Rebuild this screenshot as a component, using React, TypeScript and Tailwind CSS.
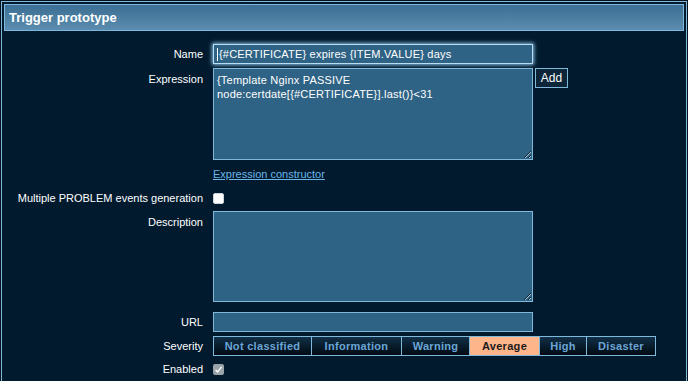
import React from 'react';

const severities = [
  { label: 'Not classified', w: 'w-[98px]' },
  { label: 'Information', w: 'w-[90px]' },
  { label: 'Warning', w: 'w-[68px]' },
  { label: 'Average', w: 'w-[70px]', active: true },
  { label: 'High', w: 'w-[47px]' },
  { label: 'Disaster', w: 'w-[69px]' },
];

const Label: React.FC<{ children: React.ReactNode; className?: string }> = ({ children, className }) => (
  <div className={`w-[199px] shrink-0 text-right text-white ${className || ''}`}>{children}</div>
);

const App: React.FC = () => {
  return (
    <div
      className="w-[688px] h-[381px] overflow-hidden bg-[#04101c] pl-[1px] pt-[1px] text-[11px]"
      style={{ fontFamily: '"Liberation Sans", Arial, sans-serif' }}
    >
      <div className="w-[686px] h-[380px] border-l border-t border-r border-[#7fb9dc] bg-[#011a2e] pt-[2px] px-[2px]">
        {/* header */}
        <div className="h-[27px] border border-[#7cb8de] bg-gradient-to-b from-[#3a6e92] to-[#5c8db0] flex items-center pl-[4px]">
          <span className="text-white font-bold text-[13px]">Trigger prototype</span>
        </div>

        <div className="flex flex-col">
          {/* Name */}
          <div className="flex mt-[13px]">
            <Label className="leading-[20px]">Name</Label>
            <div className="ml-[10px] w-[320px] h-[20px] border border-[#b8dcf2] bg-[#2f6385] shadow-[0_0_4px_1px_#8cc4e8] text-white leading-[18px] pl-[3px] flex items-center tracking-[0.2px]">
              <span className="w-[1px] h-[13px] bg-white mr-[1px]" />
              {'{#CERTIFICATE} expires {ITEM.VALUE} days'}
            </div>
          </div>

          {/* Expression */}
          <div className="flex mt-[4px]">
            <Label className="pt-[4px] leading-[14px]">Expression</Label>
            <textarea
              readOnly
              defaultValue={'{Template Nginx PASSIVE node:certdate[{#CERTIFICATE}].last()}<31'}
              className="ml-[10px] w-[320px] h-[92px] border border-[#80b8d9] bg-[#2f6385] text-white text-[11px] leading-[14px] px-[3px] pt-[4px] outline-none resize-y tracking-[0.2px]"
            />
            <button className="ml-[2px] w-[33px] h-[20px] border border-[#80b8d9] bg-[#0c2538] text-white text-[12px] leading-[18px]">
              Add
            </button>
          </div>

          {/* constructor link */}
          <div className="flex mt-[7px]">
            <div className="w-[199px] shrink-0" />
            <a className="ml-[10px] text-[#6cb6e8] underline leading-[14px] cursor-pointer">Expression constructor</a>
          </div>

          {/* Multiple PROBLEM */}
          <div className="flex mt-[10px] items-center">
            <Label className="leading-[14px]">Multiple PROBLEM events generation</Label>
            <span className="ml-[10px] w-[11px] h-[11px] rounded-[2px] bg-white border border-[#c9d3da]" />
          </div>

          {/* Description */}
          <div className="flex mt-[6px]">
            <Label className="pt-[4px] leading-[14px]">Description</Label>
            <textarea
              readOnly
              className="ml-[10px] w-[320px] h-[91px] border border-[#80b8d9] bg-[#2f6385] text-white text-[11px] outline-none"
            />
          </div>

          {/* URL */}
          <div className="flex mt-[10px]">
            <Label className="leading-[20px]">URL</Label>
            <div className="ml-[10px] w-[320px] h-[20px] border border-[#80b8d9] bg-[#2f6385]" />
          </div>

          {/* Severity */}
          <div className="flex mt-[4px]">
            <Label className="leading-[20px]">Severity</Label>
            <div className="ml-[10px] flex h-[20px] border-y border-r border-[#7fb9dc]">
              {severities.map((s) => (
                <div
                  key={s.label}
                  className={`${s.w} h-full flex items-center justify-center font-bold text-[11px] tracking-[0.3px] border-l border-[#7fb9dc] ${
                    s.active
                      ? 'bg-[#ffb58a] text-[#1b1b1b]'
                      : 'bg-gradient-to-b from-[#123048] to-[#020b14] text-[#6ba6d6]'
                  }`}
                >
                  {s.label}
                </div>
              ))}
            </div>
          </div>

          {/* Enabled */}
          <div className="flex mt-[6px] items-center">
            <Label className="leading-[14px]">Enabled</Label>
            <span className="ml-[10px] w-[11px] h-[11px] rounded-[2px] bg-[#9aa3a9] flex items-center justify-center">
              <svg width="9" height="9" viewBox="0 0 9 9">
                <path d="M1.5 4.8 L3.6 7 L7.6 1.8" fill="none" stroke="#ffffff" strokeWidth="1.3" />
              </svg>
            </span>
          </div>
        </div>
      </div>
    </div>
  );
};

export default App;
